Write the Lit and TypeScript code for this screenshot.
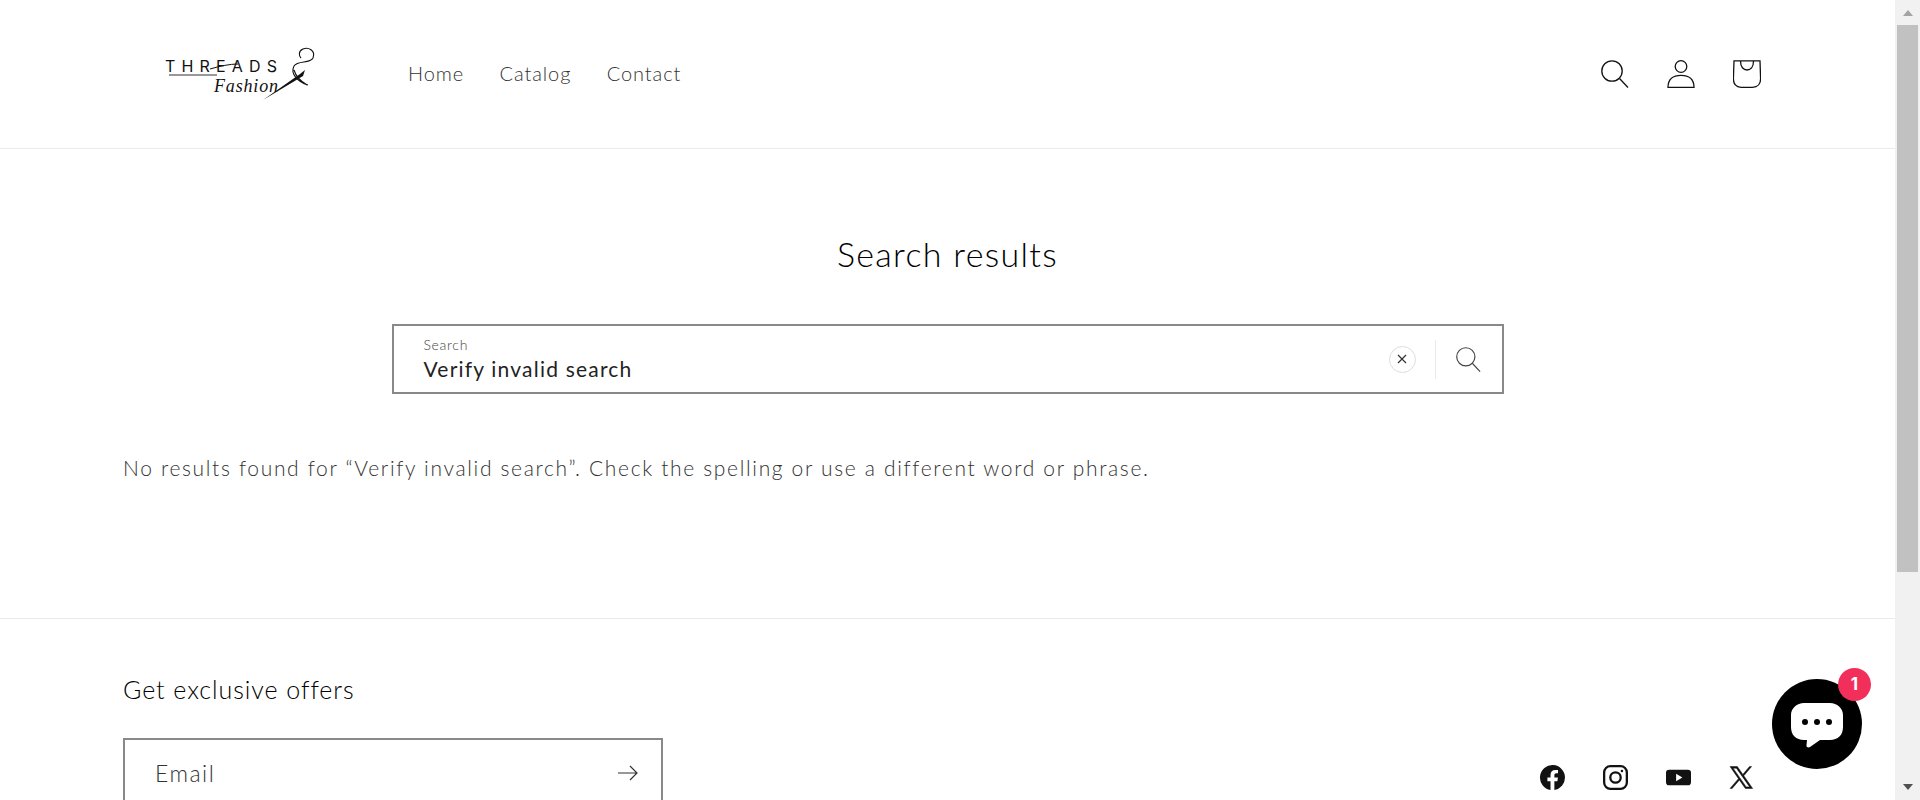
import {LitElement, css, html, svg} from 'lit';
import {customElement} from 'lit/decorators.js';

const searchIcon = svg`<circle cx="11" cy="11" r="10.200" fill="none" stroke="currentColor" stroke-width="1.300"/><path d="M18.500 18.500L27 27.500" fill="none" stroke="currentColor" stroke-width="1.300"/>`;

@customElement('app-root')
export class AppRoot extends LitElement {
  static styles = css`
    :host {
      display: flex;
      width: 1920px;
      height: 800px;
      overflow: hidden;
      position: relative;
      background: #fff;
      font-family: 'Lato', sans-serif;
      font-weight: 300;
      color: #121212;
    }
    .page { flex: 1; min-width: 0; display: flex; flex-direction: column; }

    header {
      height: 148px;
      flex: none;
      border-bottom: 1px solid #ebebeb;
      display: flex;
      align-items: center;
      padding: 0 134.500px 0 164px;
    }
    .logo { width: 154px; height: 60px; flex: none; display: block; }
    .brand { font-family: 'Inter', sans-serif; font-size: 16px; font-weight: 400; }
    .script { font-family: 'Liberation Serif', serif; font-size: 18px; font-style: italic; }
    nav { display: flex; gap: 35.500px; margin: 0 0 2px 90px; }
    nav a {
      font-size: 20px;
      line-height: 28px;
      letter-spacing: .9px;
      color: #333;
    }
    .icons { margin-left: auto; display: flex; gap: 38px; align-items: center; }
    .icons svg { width: 28px; height: 28px; display: block; color: #121212; }

    main { height: 469px; flex: none; padding-top: 85px; box-sizing: border-box; }
    h1 {
      margin: 0;
      text-align: center;
      font-size: 34px;
      line-height: 40px;
      font-weight: 300;
      letter-spacing: 1.300px;
      color: #000;
    }
    .search {
      width: 1112px;
      height: 70px;
      box-sizing: border-box;
      margin: 50px auto 0;
      border: 2px solid #898989;
      display: flex;
      align-items: center;
      padding-left: 30px;
    }
    .field { flex: 1; display: flex; flex-direction: column; margin-top: 2px; }
    .field small { font-size: 14px; line-height: 18px; letter-spacing: .7px; color: #444; }
    .field span { font-size: 21px; line-height: 30px; letter-spacing: 1.200px; font-weight: 400; color: #222; }
    .clear {
      width: 27px;
      height: 27px;
      box-sizing: border-box;
      border: 1.500px solid #ddd;
      border-radius: 50%;
      display: flex;
      align-items: center;
      justify-content: center;
      margin-right: 19px;
    }
    .clear svg { width: 10px; height: 10px; }
    .sep { width: 1px; height: 39px; background: #ebebeb; }
    .go { width: 66px; display: flex; justify-content: center; color: #444; }
    .go svg { width: 25px; height: 25px; }
    .empty {
      margin: 60px 0 0 123px;
      font-size: 21px;
      line-height: 28px;
      letter-spacing: 1.660px;
      color: #333;
    }

    footer { border-top: 1px solid #ebebeb; flex: 1; padding: 55px 122px 0 123px; position: relative; }
    footer h2 { margin: 0; font-size: 25px; line-height: 30px; font-weight: 300; letter-spacing: .95px; color: #000; }
    .email {
      width: 540px;
      height: 70px;
      box-sizing: border-box;
      margin-top: 34px;
      border: 2px solid #898989;
      display: flex;
      align-items: center;
      justify-content: space-between;
      padding: 0 22px 0 30px;
      font-size: 23px;
      letter-spacing: 1.500px;
      color: #333;
    }
    .email svg { width: 22px; height: 22px; }
    .social { position: absolute; right: 122px; top: 146px; display: flex; }
    .social span { width: 63px; display: flex; justify-content: center; }
    .social svg { width: 25px; height: 25px; }

    .bar { width: 25px; flex: none; background: #f1f1f1; display: flex; flex-direction: column; align-items: center; }
    .thumb { width: 21px; height: 547px; margin-top: 25px; background: #c1c1c1; }
    .arrow { width: 0; height: 0; border-left: 5.500px solid transparent; border-right: 5.500px solid transparent; }
    .arrow.up { border-bottom: 6px solid #a3a3a3; position: absolute; top: 10px; }
    .arrow.down { border-top: 6px solid #505050; position: absolute; top: 784px; }

    .chat {
      position: absolute;
      left: 1772px;
      top: 679px;
      width: 90px;
      height: 90px;
      border-radius: 50%;
      background: #000;
      display: flex;
      align-items: center;
      justify-content: center;
    }
    .chat svg { width: 54px; height: 54px; margin-top: 6px; }
    .badge {
      position: absolute;
      left: 66px;
      top: -11px;
      width: 33px;
      height: 33px;
      border-radius: 50%;
      background: #f22f5a;
      color: #fff;
      font: 700 17px/33px 'Inter', sans-serif;
      text-align: center;
    }
  `;

  render() {
    return html`
      <div class="page">
        <header>
          <svg class="logo" viewBox="0 0 154 60">
            <text class="brand" x="1" y="28" textLength="112" lengthAdjust="spacing" fill="#111">THREADS</text>
            <path d="M5 31H53" stroke="#333" stroke-width="1.200"/>
            <path d="M46 25C56 22 66 20 74 20" fill="none" stroke="#111" stroke-width="1"/>
            <text class="script" x="50" y="48" textLength="64" lengthAdjust="spacing" fill="#111">Fashion</text>
            <path d="M99 56L136 30L141 26L139 32Z" fill="#111"/>
            <path d="M144 41C134 38 126 30 130 22C134 16 146 20 149 14C152 6 144 3 139 5C134 7 135 12 137 14M130 26C132 33 138 38 143 41" fill="none" stroke="#111" stroke-width="1.100"/>
          </svg>
          <nav><a>Home</a><a>Catalog</a><a>Contact</a></nav>
          <div class="icons">
            <svg viewBox="0 0 28 28">${searchIcon}</svg>
            <svg viewBox="0 0 28 28" fill="none" stroke="currentColor" stroke-width="1.300">
              <circle cx="14" cy="6.500" r="5.800"/>
              <path d="M1 27.300c0-8 5-12 13-12s13 4 13 12Z"/>
            </svg>
            <svg viewBox="0 0 28 28" fill="none" stroke="currentColor" stroke-width="1.300">
              <path d="M1 .8h26l.6 18c0 5-3 8.500-8 8.500H8c-5 0-7.600-3.500-7.600-8.500Z"/>
              <path d="M7.500 1c0 6 3 9 6.500 9s6.500-3 6.500-9"/>
            </svg>
          </div>
        </header>
        <main>
          <h1>Search results</h1>
          <div class="search">
            <div class="field"><small>Search</small><span>Verify invalid search</span></div>
            <div class="clear"><svg viewBox="0 0 10 10"><path d="M1 1l8 8M9 1l-8 8" stroke="#333" stroke-width="1.200"/></svg></div>
            <div class="sep"></div>
            <div class="go"><svg viewBox="0 0 28 28">${searchIcon}</svg></div>
          </div>
          <p class="empty">No results found for “Verify invalid search”. Check the spelling or use a different word or phrase.</p>
        </main>
        <footer>
          <h2>Get exclusive offers</h2>
          <div class="email">
            <span>Email</span>
            <svg viewBox="0 0 22 22" fill="none" stroke="#333" stroke-width="1.200"><path d="M1 11h19M13 4l7 7-7 7"/></svg>
          </div>
          <div class="social">
            <span><svg viewBox="0 0 24 24"><path fill="#121212" d="M24 12a12 12 0 1 0-13.900 11.900v-8.400H7.100V12h3V9.400c0-3 1.800-4.700 4.500-4.700 1.300 0 2.700.2 2.700.2v3h-1.500c-1.500 0-2 .9-2 1.900V12h3.400l-.5 3.500h-2.900v8.400A12 12 0 0 0 24 12Z"/></svg></span>
            <span><svg viewBox="0 0 24 24" fill="none" stroke="#121212" stroke-width="2.200"><rect x="1.100" y="1.100" width="21.800" height="21.800" rx="6"/><circle cx="12" cy="12" r="5"/><circle cx="18.200" cy="5.800" r="1.200" fill="#121212" stroke="none"/></svg></span>
            <span><svg viewBox="0 0 24 24"><path fill="#121212" d="M3 4.500h18a3 3 0 0 1 3 3v9a3 3 0 0 1-3 3H3a3 3 0 0 1-3-3v-9a3 3 0 0 1 3-3Z"/><path fill="#fff" d="M9.700 8.500v7l6-3.500Z"/></svg></span>
            <span><svg viewBox="0 0 24 24"><path fill="#121212" stroke="#121212" stroke-width=".5" d="M1 1.500h7l5.300 7.500 6.400-7.500h2l-7.500 8.800L22.700 22.500h-7l-5.700-8.100-7 8.100H1l8.100-9.400ZM3.900 3l12.600 18h3.300L7.100 3Z"/></svg></span>
          </div>
        </footer>
      </div>
      <div class="bar">
        <span class="arrow up"></span>
        <div class="thumb"></div>
        <span class="arrow down"></span>
      </div>
      <div class="chat">
        <svg viewBox="0 0 54 54"><path fill="#fff" d="M14 3h26c7 0 13 5 13 12v12c0 8-5 13-13 13h-10l-10 7c-2 1-4 0-3.500-2L17 40h-3C6 40 1 35 1 27V15C1 8 7 3 14 3Z"/><circle cx="15" cy="22" r="3" fill="#000"/><circle cx="27" cy="22" r="3" fill="#000"/><circle cx="39" cy="22" r="3" fill="#000"/></svg>
        <div class="badge">1</div>
      </div>
    `;
  }
}
